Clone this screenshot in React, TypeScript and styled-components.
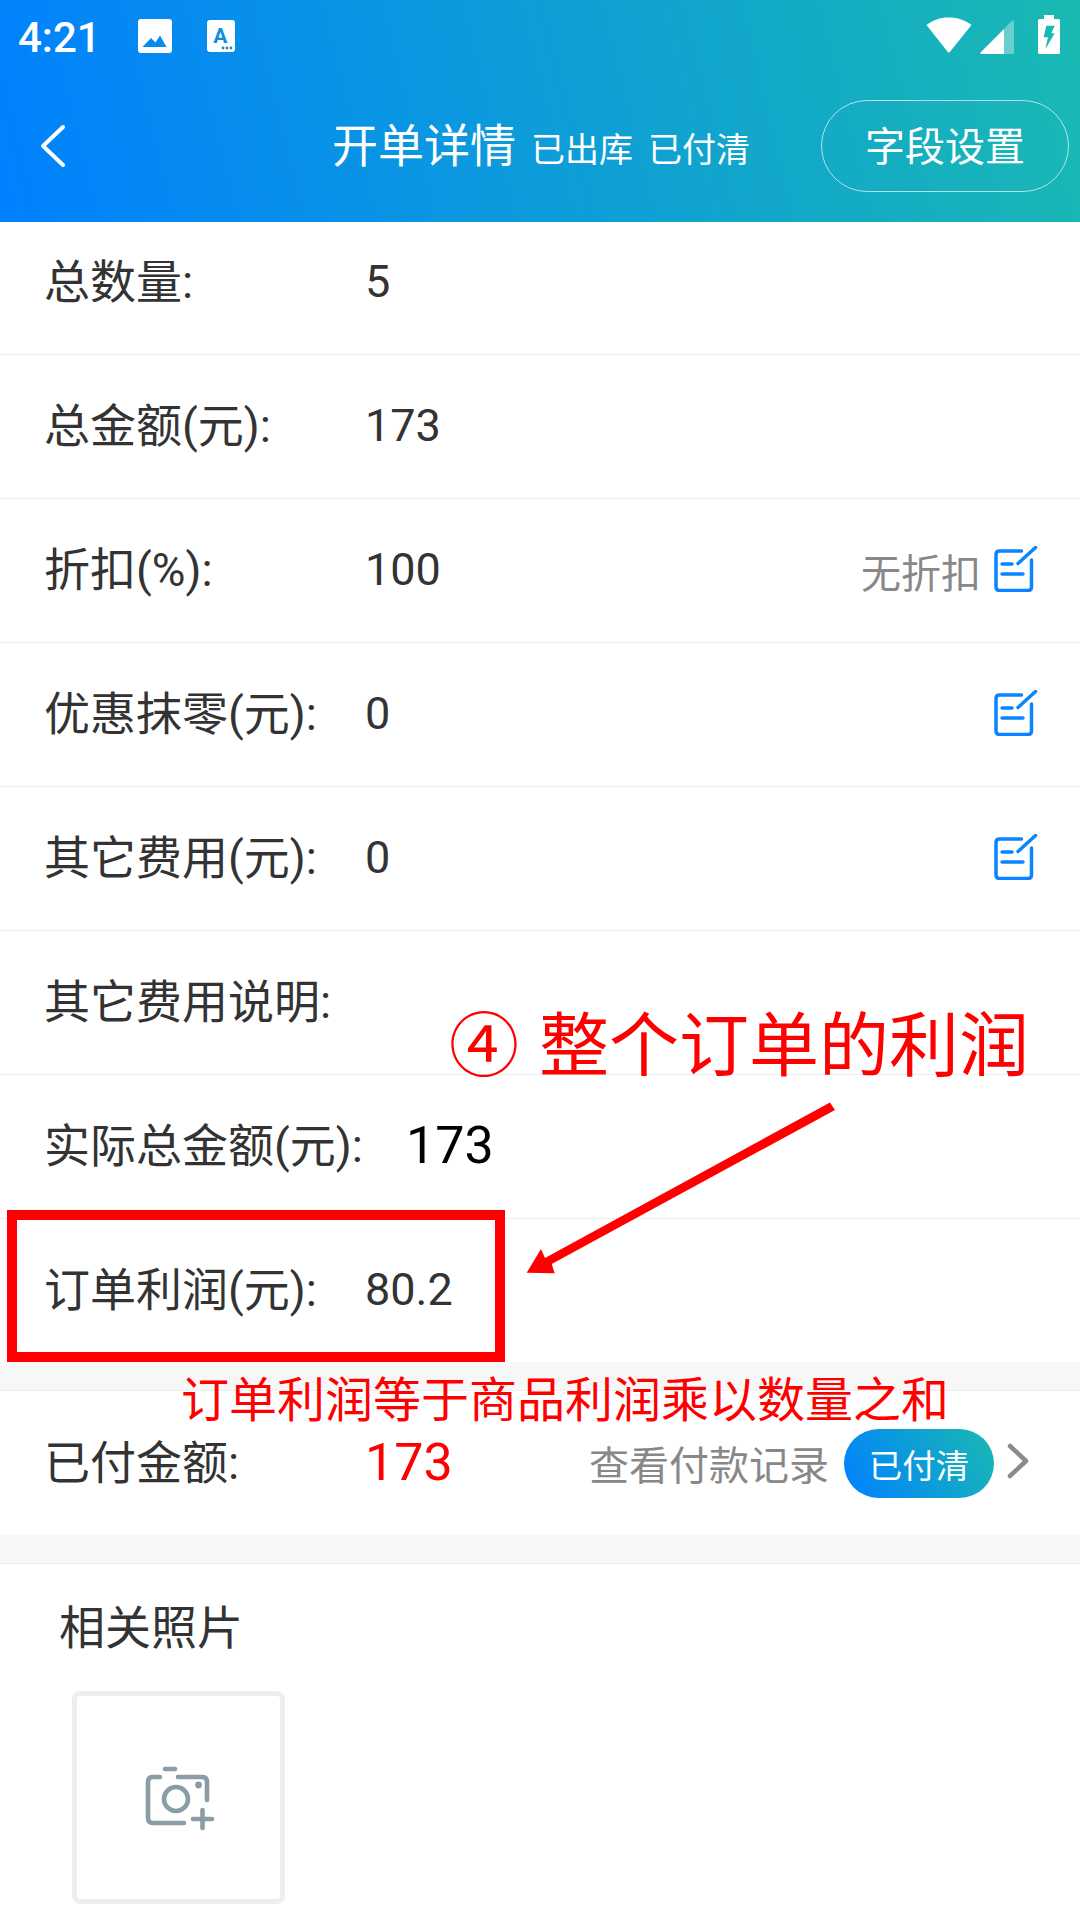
import styled, {createGlobalStyle} from 'styled-components';

const GlobalStyle = createGlobalStyle`
  html, body {
    margin: 0;
    padding: 0;
    background: #fff;
  }
  body {
    font-family: Roboto, 'Noto Sans CJK SC', sans-serif;
  }
`;

const Page = styled.div`
  height: 1920px;
  overflow: hidden;
  position: relative;
  width: 1080px;
`;

const Header = styled.header`
  background: linear-gradient(76deg, #0080ff 0%, #1ab9b2 100%);
  color: #fff;
  height: 222px;
  position: relative;
  z-index: 1;
`;

const StatusBar = styled.div`
  align-items: flex-start;
  display: flex;
  height: 70px;
  position: relative;
`;

const Time = styled.span`
  font-size: 42px;
  font-weight: 500;
  line-height: 48px;
  margin: 14px 0 0 18px;
  width: 120px;
`;

const StatusIcon = styled.svg<{$left?: number; $top: number}>`
  display: block;
  flex: none;
  margin-left: ${({$left}) => $left ?? 0}px;
  margin-top: ${({$top}) => $top}px;
`;

const NavBar = styled.div`
  align-items: center;
  display: flex;
  height: 152px;
`;

const BackIcon = styled.svg`
  flex: none;
  margin-left: 39px;
`;

const Title = styled.h1`
  font-size: 46px;
  font-weight: 400;
  line-height: 56px;
  margin: 4px 0 0 266px;
  white-space: nowrap;
`;

const Status = styled.span`
  font-size: 34px;
  margin-left: 15px;
`;

const FieldButton = styled.button`
  background: transparent;
  border: 1px solid rgba(255, 255, 255, 0.65);
  border-radius: 46px;
  color: #fff;
  font: inherit;
  font-size: 40px;
  height: 92px;
  margin-left: auto;
  margin-right: 11px;
  padding: 0 0 5px;
  width: 248px;
`;

const List = styled.div`
  margin-top: -11px;
`;

const Row = styled.div<{$plain?: boolean}>`
  align-items: center;
  border-bottom: ${({$plain}) => ($plain ? '0' : '1px solid #eeeeee')};
  box-sizing: border-box;
  color: #333;
  display: flex;
  font-size: 40px;
  height: ${({$plain}) => ($plain ? 143 : 144)}px;
  padding: 0 43px 0 44px;
`;

const Label = styled.span<{$wide?: boolean}>`
  flex: none;
  font-size: 46px;
  margin-top: -9px;
  width: ${({$wide}) => ($wide ? 362 : 321)}px;
`;

const Value = styled.span<{$tone?: 'black' | 'red'}>`
  color: ${({$tone}) => ($tone === 'black' ? '#000' : $tone === 'red' ? '#f00' : '#333')};
  font-size: ${({$tone}) => ($tone ? 52 : 45)}px;
  margin-top: -2px;
`;

const Hint = styled.span`
  color: #888;
  margin-left: auto;
`;

const EditIcon = styled.svg<{$solo?: boolean}>`
  flex: none;
  margin-left: ${({$solo}) => ($solo ? 'auto' : '12px')};
  margin-right: -1px;
  margin-top: -3px;
`;

const Gap = styled.div`
  background: #f7f7f7;
  border-bottom: 1px solid #eeeeee;
  box-sizing: border-box;
  height: 29px;
`;

const PaidRow = styled(Row)`
  border-bottom: 0;
  height: 144px;
  padding-right: 50px;
`;

const Pill = styled.span`
  align-items: center;
  background: linear-gradient(60deg, #0080ff 0%, #1ab9b2 100%);
  border-radius: 35px;
  color: #fff;
  display: flex;
  flex: none;
  font-size: 33.5px;
  height: 69px;
  justify-content: center;
  margin-left: 15px;
  width: 150px;
`;

const Chevron = styled.svg`
  flex: none;
  margin-left: 12px;
  margin-top: -4px;
`;

const Photos = styled.section`
  padding: 34px 0 0 59px;
`;

const PhotosTitle = styled.h2`
  color: #333;
  font-size: 46px;
  font-weight: 400;
  line-height: 60px;
  margin: 0;
`;

const AddPhoto = styled.div`
  align-items: center;
  border: 5px solid #eeeeee;
  border-radius: 8px;
  box-sizing: border-box;
  display: flex;
  height: 213px;
  justify-content: center;
  margin: 33px 0 0 13px;
  width: 213px;
`;

const RedBox = styled.div`
  border: 10px solid #f00;
  box-sizing: border-box;
  height: 152px;
  left: 7px;
  position: absolute;
  top: 1210px;
  width: 498px;
  z-index: 2;
`;

const Callout = styled.div`
  color: #f00;
  font-size: 70px;
  left: 449px;
  line-height: 80px;
  position: absolute;
  top: 1007px;
  white-space: nowrap;
  z-index: 2;
`;

const CalloutNumber = styled.span`
  display: inline-block;
  margin-right: 20px;
`;

const CalloutNote = styled.div`
  color: #f00;
  font-size: 48px;
  left: 181px;
  line-height: 60px;
  position: absolute;
  top: 1371px;
  white-space: nowrap;
  z-index: 2;
`;

const Arrow = styled.svg`
  left: 520px;
  position: absolute;
  top: 1095px;
  z-index: 2;
`;

function EditGlyph({solo}: {solo?: boolean}) {
  return (
    <EditIcon $solo={solo} width="45" height="46" viewBox="0 0 45 46" fill="none" stroke="#0a84ff" strokeWidth="3.5" strokeLinecap="round" strokeLinejoin="round">
      <path d="M28.5 5H6.5Q3 5 3 8.5V41Q3 44.5 6.5 44.5H35Q38.5 44.5 38.5 41V14" />
      <path d="M25 17.5L42.5 1.5" />
      <path d="M9 18H19" />
      <path d="M9 28H30" />
    </EditIcon>
  );
}

const rows: {label: string; value?: string; hint?: string; edit?: boolean}[] = [
  {label: '总数量:', value: '5'},
  {label: '总金额(元):', value: '173'},
  {label: '折扣(%):', value: '100', hint: '无折扣', edit: true},
  {label: '优惠抹零(元):', value: '0', edit: true},
  {label: '其它费用(元):', value: '0', edit: true},
  {label: '其它费用说明:'},
];

function App() {
  return (
    <Page>
      <GlobalStyle />
      <Header>
        <StatusBar>
          <Time>4:21</Time>
          <StatusIcon $top={19} width="34" height="34" viewBox="0 0 34 34">
            <path
              fill="#fff"
              fillRule="evenodd"
              d="M3 0H31Q34 0 34 3V31Q34 34 31 34H3Q0 34 0 31V3Q0 0 3 0ZM4.5 28H28.5L22 16.5L17.5 23.5L13 19Z"
            />
          </StatusIcon>
          <StatusIcon $left={35} $top={20} width="28" height="32" viewBox="0 0 28 32">
            <rect width="28" height="32" rx="3" fill="#fff" />
            <text x="13.3" y="23" fontSize="21" fontWeight="700" fontFamily="Roboto, sans-serif" textAnchor="middle" fill="#0d8de4">A</text>
            <circle cx="16" cy="28" r="1.4" fill="#0d8de4" />
            <circle cx="20" cy="28" r="1.4" fill="#0d8de4" />
            <circle cx="24" cy="28" r="1.4" fill="#0d8de4" />
          </StatusIcon>
          <StatusIcon $left={691} $top={17} width="46" height="36" viewBox="0 0 46 36">
            <path fill="#fff" d="M0.5 8C7 3 14 0.5 22.8 0.5S39 3 45.5 8L23.8 35Q22.8 36 21.8 35Z" />
          </StatusIcon>
          <StatusIcon $left={8} $top={20} width="34" height="34" viewBox="0 0 34 34">
            <path fill="#fff" d="M0.5 32.5L24 9V34H1.5Q0 34 0.5 32.5Z" />
            <path fill="#fff" fillOpacity="0.35" d="M24 9L31.5 1Q34 -0.5 34 2V32.5Q34 34 32.5 34H24Z" />
          </StatusIcon>
          <StatusIcon $left={24} $top={15} width="22" height="39" viewBox="0 0 22 39">
            <path
              fill="#fff"
              fillRule="evenodd"
              d="M6 0H16V4H20.5Q22 4 22 5.5V37.5Q22 39 20.5 39H1.5Q0 39 0 37.5V5.5Q0 4 1.5 4H6ZM8.3 10.7L5.7 22.3H10L7.3 34.3L16.7 18.3H13.3L16.7 10.7Z"
            />
          </StatusIcon>
        </StatusBar>
        <NavBar>
          <BackIcon width="27" height="44" viewBox="0 0 27 44" fill="none" stroke="#fff" strokeWidth="4" strokeLinecap="round" strokeLinejoin="round">
            <path d="M24 3L4 22L24 41" />
          </BackIcon>
          <Title>
            开单详情
            <Status>已出库</Status>
            <Status>已付清</Status>
          </Title>
          <FieldButton>字段设置</FieldButton>
        </NavBar>
      </Header>
      <List>
        {rows.map(({label, value, hint, edit}) => (
          <Row key={label}>
            <Label>{label}</Label>
            {value && <Value>{value}</Value>}
            {hint && <Hint>{hint}</Hint>}
            {edit && <EditGlyph solo={!hint} />}
          </Row>
        ))}
        <Row>
          <Label $wide>实际总金额(元):</Label>
          <Value $tone="black">173</Value>
        </Row>
        <Row $plain>
          <Label>订单利润(元):</Label>
          <Value>80.2</Value>
        </Row>
      </List>
      <Gap />
      <PaidRow $plain>
        <Label>已付金额:</Label>
        <Value $tone="red">173</Value>
        <Hint>查看付款记录</Hint>
        <Pill>已付清</Pill>
        <Chevron width="24" height="36" viewBox="0 0 24 36" fill="none" stroke="#8a8a8a" strokeWidth="4.5" strokeLinecap="round" strokeLinejoin="round">
          <path d="M4 3L20 18L4 33" />
        </Chevron>
      </PaidRow>
      <Gap />
      <Photos>
        <PhotosTitle>相关照片</PhotosTitle>
        <AddPhoto>
          <svg width="72" height="72" viewBox="33 41 72 72" fill="none" stroke="#8a9ca6" strokeWidth="4.6" strokeLinecap="round" strokeLinejoin="round">
            <path d="M50 56H43Q38 56 38 61V97Q38 102 43 102H74" />
            <path d="M55 48H65" />
            <path d="M68 56H92Q97 56 97 61V79" />
            <circle cx="66" cy="78" r="12" />
            <circle cx="88.5" cy="64" r="3.4" fill="#8a9ca6" stroke="none" />
            <path d="M83 98H102" />
            <path d="M92.5 89V107" />
          </svg>
        </AddPhoto>
      </Photos>
      <RedBox />
      <Callout>
        <CalloutNumber>④</CalloutNumber>整个订单的利润
      </Callout>
      <Arrow width="320" height="190" viewBox="0 0 320 190">
        <path fill="#f00" d="M310 7.5L315 15L31.7 169L34.7 178.3L6.7 177.7L21 154L25 163Z" />
      </Arrow>
      <CalloutNote>订单利润等于商品利润乘以数量之和</CalloutNote>
    </Page>
  );
}

export default App;
